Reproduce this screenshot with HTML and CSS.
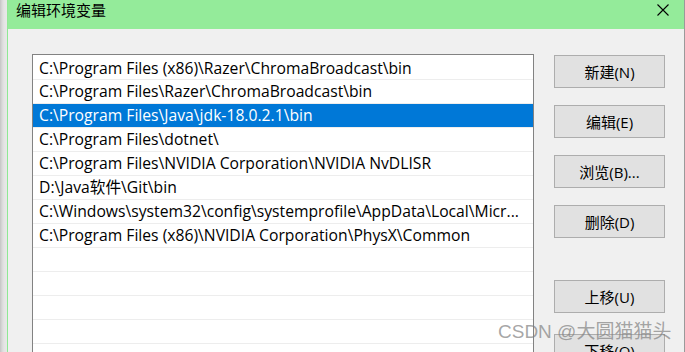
FILE: index.html
```html
<!DOCTYPE html>
<html lang="zh-CN">
<head>
<meta charset="utf-8">
<title>编辑环境变量</title>
<link rel="stylesheet" href="styles.css">
</head>
<body>
<div class="screen">
  <div class="backdrop"></div>
  <div class="dialog">
    <header class="titlebar">
      <span class="title">编辑环境变量</span>
      <span class="close" aria-label="关闭">
        <svg width="12" height="12" viewBox="0 0 12 12"><path d="M0.5 0.5 L11.5 11.5 M11.5 0.5 L0.5 11.5" stroke="#000" stroke-width="1.1" fill="none"/></svg>
      </span>
    </header>
    <div class="content">
      <ul class="pathlist">
        <li class="row">C:\Program Files (x86)\Razer\ChromaBroadcast\bin</li>
        <li class="row">C:\Program Files\Razer\ChromaBroadcast\bin</li>
        <li class="row selected">C:\Program Files\Java\jdk-18.0.2.1\bin</li>
        <li class="row">C:\Program Files\dotnet\</li>
        <li class="row">C:\Program Files\NVIDIA Corporation\NVIDIA NvDLISR</li>
        <li class="row">D:\Java软件\Git\bin</li>
        <li class="row">C:\Windows\system32\config\systemprofile\AppData\Local\Micr...</li>
        <li class="row">C:\Program Files (x86)\NVIDIA Corporation\PhysX\Common</li>
        <li class="row"></li>
        <li class="row"></li>
        <li class="row"></li>
        <li class="row"></li>
        <li class="row"></li>
      </ul>
      <div class="actions">
        <div class="group">
          <button class="btn">新建(N)</button>
          <button class="btn">编辑(E)</button>
          <button class="btn">浏览(B)...</button>
          <button class="btn">删除(D)</button>
        </div>
        <div class="group move">
          <button class="btn">上移(U)</button>
          <button class="btn">下移(O)</button>
        </div>
      </div>
    </div>
  </div>
  <div class="edge"></div>
  <div class="watermark">CSDN @大圆猫猫头</div>
</div>
</body>
</html>
```

FILE: styles.css
```css
* { box-sizing: border-box; }
html, body { margin: 0; padding: 0; }
body {
  width: 685px;
  height: 352px;
  overflow: hidden;
  font-family: "Open Sans", "Noto Sans CJK SC", sans-serif;
  background: #f0f0f0;
}
.screen {
  position: relative;
  display: flex;
  width: 685px;
  height: 352px;
  overflow: hidden;
}
.backdrop {
  width: 7px;
  flex: none;
  background: linear-gradient(to right, #c4c4c4 0, #d8d8d8 2px, #e4e4e4 4px, #e8e8e8 7px);
}
.edge {
  width: 1px;
  flex: none;
  background: #9a9a9a;
}
.dialog {
  flex: 1;
  display: flex;
  flex-direction: column;
  border-left: 1px solid #8fe894;
  background: #f0f0f0;
}
.titlebar {
  height: 29px;
  flex: none;
  display: flex;
  justify-content: space-between;
  background: #94eb9a;
  padding: 0 15px 0 8px;
}
.title {
  font-family: "Noto Sans CJK SC", sans-serif;
  font-size: 15px;
  line-height: 20px;
  color: #000;
}
.close {
  display: flex;
  padding-top: 4px;
}
.content {
  display: flex;
  gap: 20px;
  padding: 25px 0 0 24px;
  flex: 1;
}
.pathlist {
  list-style: none;
  margin: 0;
  padding: 1px 0 0 0;
  width: 502px;
  height: 330px;
  background: #fff;
  border: 1px solid #828282;
  border-bottom: none;
  flex: none;
}
.row {
  height: 24px;
  border-bottom: 1px solid #ededed;
  padding: 0 0 0 6px;
  font-size: 15.7px;
  line-height: 23px;
  white-space: nowrap;
  overflow: hidden;
  color: #000;
}
.row:first-child { line-height: 24px; }
.row.selected {
  background: #0078d7;
  color: #fff;
}
.actions {
  display: flex;
  flex-direction: column;
  gap: 42px;
  padding-top: 1px;
}
.group {
  display: flex;
  flex-direction: column;
  gap: 17px;
}
.group.move { gap: 21px; }
.btn {
  width: 111px;
  height: 33px;
  margin: 0;
  padding: 0;
  background: #e1e1e1;
  border: 1px solid #adadad;
  font-family: "Open Sans", "Noto Sans CJK SC", sans-serif;
  font-size: 15px;
  color: #000;
}
.watermark {
  position: absolute;
  left: 498px;
  top: 320px;
  font-family: "Liberation Sans", "Noto Sans CJK SC", sans-serif;
  font-size: 19px;
  line-height: 24px;
  color: rgba(128, 128, 128, 0.7);
}
```
